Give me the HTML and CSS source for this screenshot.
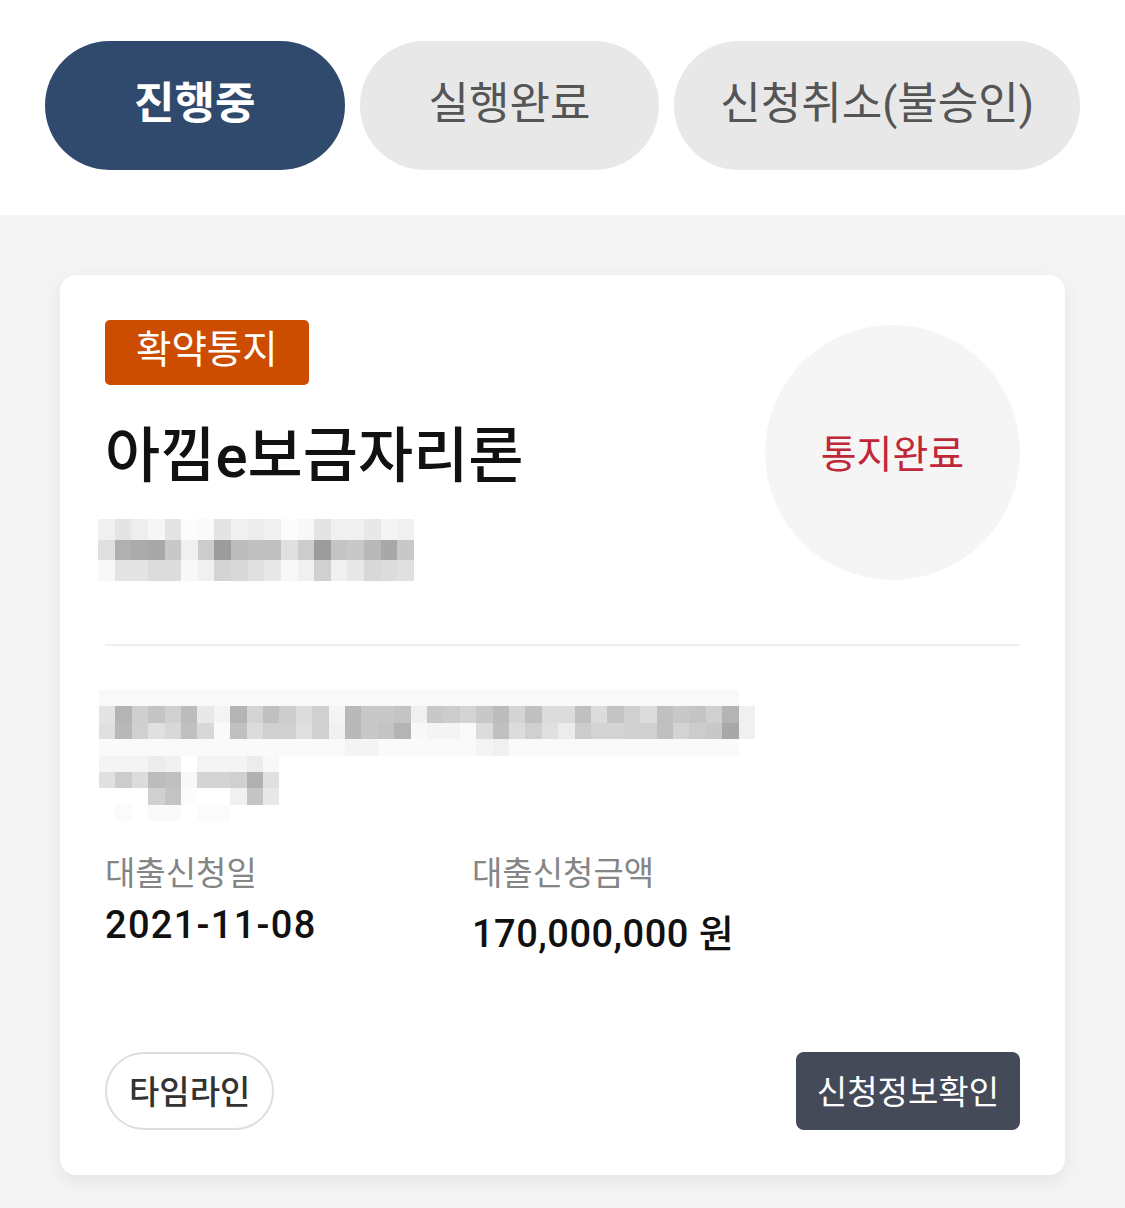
FILE: index.html
```html
<!DOCTYPE html>
<html lang="ko">
<head>
    <meta charset="UTF-8">
    <meta name="viewport" content="width=device-width, initial-scale=1.0">
    <title>대출신청현황</title>
    <link rel="stylesheet" href="styles.css">
</head>
<body>

    <nav class="tabs">
        <a class="tab active" href="#">진행중</a>
        <a class="tab" href="#">실행완료</a>
        <a class="tab" href="#">신청취소(불승인)</a>
    </nav>

    <main class="list">
        <div class="card">
            <div class="card-head">
                <div class="card-title">
                    <span class="badge">확약통지</span>
                    <h2 class="product">아낌e보금자리론</h2>
                    <!-- masked: application number -->
                    <svg class="mosaic mosaic-sm" viewBox="0 0 19 3" preserveAspectRatio="none">
                        <g>
                            <rect x="0" fill="#f0f0f0"/><rect x="1" fill="#e4e4e4"/><rect x="2" fill="#eeeeee"/><rect x="3" fill="#f6f6f6"/><rect x="4" fill="#e4e4e4"/><rect x="5" fill="#fcfcfc"/><rect x="6" fill="#fafafa"/><rect x="7" fill="#e4e4e4"/><rect x="8" fill="#f0f0f0"/><rect x="9" fill="#ececec"/><rect x="10" fill="#f0f0f0"/><rect x="11" fill="#fcfcfc"/><rect x="12" fill="#f8f8f8"/><rect x="13" fill="#e4e4e4"/><rect x="14" fill="#f0f0f0"/><rect x="15" fill="#f0f0f0"/><rect x="16" fill="#e8e8e8"/><rect x="17" fill="#f4f4f4"/><rect x="18" fill="#f0f0f0"/>
                        </g>
                        <g transform="translate(0 1)">
                            <rect x="0" fill="#e0e0e0"/><rect x="1" fill="#b0b0b0"/><rect x="2" fill="#ababab"/><rect x="3" fill="#a8a8a8"/><rect x="4" fill="#c8c8c8"/><rect x="5" fill="#f0f0f0"/><rect x="6" fill="#cccccc"/><rect x="7" fill="#9c9c9c"/><rect x="8" fill="#bcbcbc"/><rect x="9" fill="#c0c0c0"/><rect x="10" fill="#c0c0c0"/><rect x="11" fill="#e0e0e0"/><rect x="12" fill="#cccccc"/><rect x="13" fill="#9c9c9c"/><rect x="14" fill="#c4c4c4"/><rect x="15" fill="#c8c8c8"/><rect x="16" fill="#b8b8b8"/><rect x="17" fill="#a8a8a8"/><rect x="18" fill="#c8c8c8"/>
                        </g>
                        <g transform="translate(0 2)">
                            <rect x="0" fill="#f8f8f8"/><rect x="1" fill="#e4e4e4"/><rect x="2" fill="#e4e4e4"/><rect x="3" fill="#dcdcdc"/><rect x="4" fill="#dcdcdc"/><rect x="5" fill="#f8f8f8"/><rect x="6" fill="#f0f0f0"/><rect x="7" fill="#d4d4d4"/><rect x="8" fill="#d8d8d8"/><rect x="9" fill="#e0e0e0"/><rect x="10" fill="#e8e8e8"/><rect x="11" fill="#f8f8f8"/><rect x="12" fill="#f0f0f0"/><rect x="13" fill="#d0d0d0"/><rect x="14" fill="#f0f0f0"/><rect x="15" fill="#e8e8e8"/><rect x="16" fill="#d8d8d8"/><rect x="17" fill="#dcdcdc"/><rect x="18" fill="#e0e0e0"/>
                        </g>
                    </svg>
                </div>
                <div class="status">
                    <span>통지완료</span>
                </div>
            </div>

            <hr class="divider">

            <!-- masked: property address -->
            <svg class="mosaic mosaic-lg" viewBox="0 0 40 8" preserveAspectRatio="none">
                <rect class="row" x="0" y="0" width="39" height="1" fill="#f9f9f9"/>
                <g transform="translate(0 1)">
                    <rect x="0" fill="#e4e4e4"/><rect x="1" fill="#b4b4b4"/><rect x="2" fill="#cfcfcf"/><rect x="3" fill="#c4c4c4"/><rect x="4" fill="#d0d0d0"/><rect x="5" fill="#bcbcbc"/><rect x="6" fill="#e8e8e8"/><rect x="7" fill="#f4f4f4"/><rect x="8" fill="#b4b4b4"/><rect x="9" fill="#d4d4d4"/><rect x="10" fill="#c0c0c0"/><rect x="11" fill="#cccccc"/><rect x="12" fill="#dcdcdc"/><rect x="13" fill="#d0d0d0"/><rect x="14" fill="#f4f4f4"/><rect x="15" fill="#b8b8b8"/><rect x="16" fill="#c8c8c8"/><rect x="17" fill="#c8c8c8"/><rect x="18" fill="#c4c4c4"/><rect x="19" fill="#f0f0f0"/>
                    <rect x="20" fill="#c8c8c8"/><rect x="21" fill="#cccccc"/><rect x="22" fill="#d4d4d4"/><rect x="23" fill="#c8c8c8"/><rect x="24" fill="#bcbcbc"/><rect x="25" fill="#d4d4d4"/><rect x="26" fill="#c0c0c0"/><rect x="27" fill="#dcdcdc"/><rect x="28" fill="#dcdcdc"/><rect x="29" fill="#c0c0c0"/><rect x="30" fill="#dcdcdc"/><rect x="31" fill="#c4c4c4"/><rect x="32" fill="#d0d0d0"/><rect x="33" fill="#dcdcdc"/><rect x="34" fill="#c0c0c0"/><rect x="35" fill="#c8c8c8"/><rect x="36" fill="#c4c4c4"/><rect x="37" fill="#d0d0d0"/><rect x="38" fill="#b4b4b4"/><rect x="39" fill="#f0f0f0"/>
                </g>
                <g transform="translate(0 2)">
                    <rect x="0" fill="#e0e0e0"/><rect x="1" fill="#b8b8b8"/><rect x="2" fill="#d0d0d0"/><rect x="3" fill="#e0e0e0"/><rect x="4" fill="#d8d8d8"/><rect x="5" fill="#c0c0c0"/><rect x="6" fill="#d8d8d8"/><rect x="7" fill="#fafafa"/><rect x="8" fill="#c0c0c0"/><rect x="9" fill="#dcdcdc"/><rect x="10" fill="#d0d0d0"/><rect x="11" fill="#d0d0d0"/><rect x="12" fill="#e0e0e0"/><rect x="13" fill="#d0d0d0"/><rect x="14" fill="#f0f0f0"/><rect x="15" fill="#b8b8b8"/><rect x="16" fill="#c8c8c8"/><rect x="17" fill="#c4c4c4"/><rect x="18" fill="#b4b4b4"/><rect x="19" fill="#f8f8f8"/>
                    <rect x="20" fill="#f4f4f4"/><rect x="21" fill="#f4f4f4"/><rect x="22" fill="#fafafa"/><rect x="23" fill="#dcdcdc"/><rect x="24" fill="#c0c0c0"/><rect x="25" fill="#dcdcdc"/><rect x="26" fill="#d0d0d0"/><rect x="27" fill="#e0e0e0"/><rect x="28" fill="#ececec"/><rect x="29" fill="#cccccc"/><rect x="30" fill="#d4d4d4"/><rect x="31" fill="#d4d4d4"/><rect x="32" fill="#d0d0d0"/><rect x="33" fill="#d0d0d0"/><rect x="34" fill="#c0c0c0"/><rect x="35" fill="#d4d4d4"/><rect x="36" fill="#cccccc"/><rect x="37" fill="#c8c8c8"/><rect x="38" fill="#a8a8a8"/><rect x="39" fill="#f0f0f0"/>
                </g>
                <rect class="row" x="0" y="3" width="39" height="1" fill="#fafafa"/>
                <g transform="translate(0 3)">
                    <rect x="15" fill="#f4f4f4"/><rect x="16" fill="#f4f4f4"/><rect x="23" fill="#f4f4f4"/><rect x="24" fill="#f0f0f0"/>
                </g>
                <g transform="translate(0 4)">
                    <rect x="0" fill="#f4f4f4"/><rect x="1" fill="#f4f4f4"/><rect x="2" fill="#f4f4f4"/><rect x="3" fill="#ececec"/><rect x="4" fill="#f0f0f0"/><rect x="6" fill="#f4f4f4"/><rect x="7" fill="#f4f4f4"/><rect x="8" fill="#f4f4f4"/><rect x="9" fill="#ececec"/><rect x="10" fill="#f8f8f8"/>
                </g>
                <g transform="translate(0 5)">
                    <rect x="0" fill="#e0e0e0"/><rect x="1" fill="#cccccc"/><rect x="2" fill="#dcdcdc"/><rect x="3" fill="#bcbcbc"/><rect x="4" fill="#c0c0c0"/><rect x="5" fill="#f8f8f8"/><rect x="6" fill="#d4d4d4"/><rect x="7" fill="#d4d4d4"/><rect x="8" fill="#d0d0d0"/><rect x="9" fill="#b0b0b0"/><rect x="10" fill="#e0e0e0"/>
                </g>
                <g transform="translate(0 6)">
                    <rect x="3" fill="#d0d0d0"/><rect x="4" fill="#c4c4c4"/><rect x="5" fill="#fcfcfc"/><rect x="8" fill="#f0f0f0"/><rect x="9" fill="#c4c4c4"/><rect x="10" fill="#e8e8e8"/>
                </g>
                <g transform="translate(0 7)">
                    <rect x="1" fill="#fbfbfb"/><rect x="3" fill="#fafafa"/><rect x="4" fill="#fafafa"/><rect x="6" fill="#fbfbfb"/><rect x="7" fill="#fbfbfb"/>
                </g>
            </svg>

            <dl class="info">
                <div class="info-item">
                    <dt>대출신청일</dt>
                    <dd class="date">2021-11-08</dd>
                </div>
                <div class="info-item">
                    <dt>대출신청금액</dt>
                    <dd class="amount">170,000,000 원</dd>
                </div>
            </dl>

            <div class="card-foot">
                <button type="button" class="btn-outline">타임라인</button>
                <button type="button" class="btn-dark">신청정보확인</button>
            </div>
        </div>
    </main>

</body>
</html>
```

FILE: styles.css
```css
* {
    box-sizing: border-box;
}

body {
    margin: 0;
    padding: 0;
    font-family: Roboto, "Noto Sans CJK KR", sans-serif;
    background-color: #f4f4f4;
    color: #111111;
}

.tabs {
    display: grid;
    grid-template-columns: 1fr 1fr auto;
    gap: 15px;
    padding: 41px 45px 45px;
    background-color: #ffffff;
}
.tabs .tab {
    display: flex;
    justify-content: center;
    align-items: center;
    height: 129px;
    padding: 0 46px 12px;
    border-radius: 65px;
    background-color: #e8e8e8;
    color: #555555;
    font-size: 44px;
    text-decoration: none;
}
.tabs .tab.active {
    background-color: #304a6e;
    color: #ffffff;
    font-weight: 700;
}

.list {
    padding: 60px 60px 33px;
}

.card {
    padding: 45px;
    border-radius: 16px;
    background-color: #ffffff;
    box-shadow: 0 6px 18px rgba(0, 0, 0, 0.07);
}

.card-head {
    display: flex;
    justify-content: space-between;
    align-items: flex-start;
}
.card-title {
    display: flex;
    flex-direction: column;
    align-items: flex-start;
}
.badge {
    display: inline-block;
    height: 65px;
    padding: 0 31px 6px;
    border-radius: 5px;
    background-color: #cc4c02;
    color: #ffffff;
    font-size: 38.5px;
    line-height: 59px;
}
.product {
    margin: 30px 0 0;
    font-size: 60px;
    font-weight: 500;
    line-height: 84px;
    color: #111111;
}

.mosaic {
    display: block;
    shape-rendering: crispEdges;
}
.mosaic rect {
    width: 1px;
    height: 1px;
}
.mosaic rect.row {
    width: 39px;
}
.mosaic-sm {
    width: 316px;
    height: 62px;
    margin: 20px 0 0 -7px;
}
.mosaic-lg {
    width: 656px;
    height: 131px;
    margin: 44px 0 0 -6px;
}

.status {
    display: flex;
    justify-content: center;
    align-items: center;
    flex-shrink: 0;
    width: 255px;
    height: 255px;
    margin-top: 5px;
    padding-bottom: 4px;
    border-radius: 50%;
    background-color: #f5f5f5;
    color: #c0283a;
    font-size: 39px;
}

.divider {
    height: 2px;
    margin: 63px 0 0;
    border: 0;
    background-color: #eeeeee;
}

.info {
    display: grid;
    grid-template-columns: 367px 1fr;
    margin: 26px 0 0;
}
.info-item dt {
    font-size: 33px;
    color: #858585;
}
.info-item dd {
    margin: 8px 0 0;
    font-size: 38px;
    font-weight: 500;
    color: #111111;
}
.info-item .date {
    letter-spacing: 1.3px;
}
.info-item .amount {
    letter-spacing: 0.5px;
}

.card-foot {
    display: flex;
    justify-content: space-between;
    margin-top: 94px;
}
.card-foot button {
    height: 78px;
    font-family: inherit;
    font-size: 33px;
    cursor: pointer;
}
.btn-outline {
    padding: 0 22px 2px;
    border: 2px solid #dedede;
    border-radius: 39px;
    background-color: #ffffff;
    color: #333333;
    font-weight: 500;
}
.btn-dark {
    padding: 0 21px 2px;
    border: 0;
    border-radius: 8px;
    background-color: #454a59;
    color: #ffffff;
}
```
